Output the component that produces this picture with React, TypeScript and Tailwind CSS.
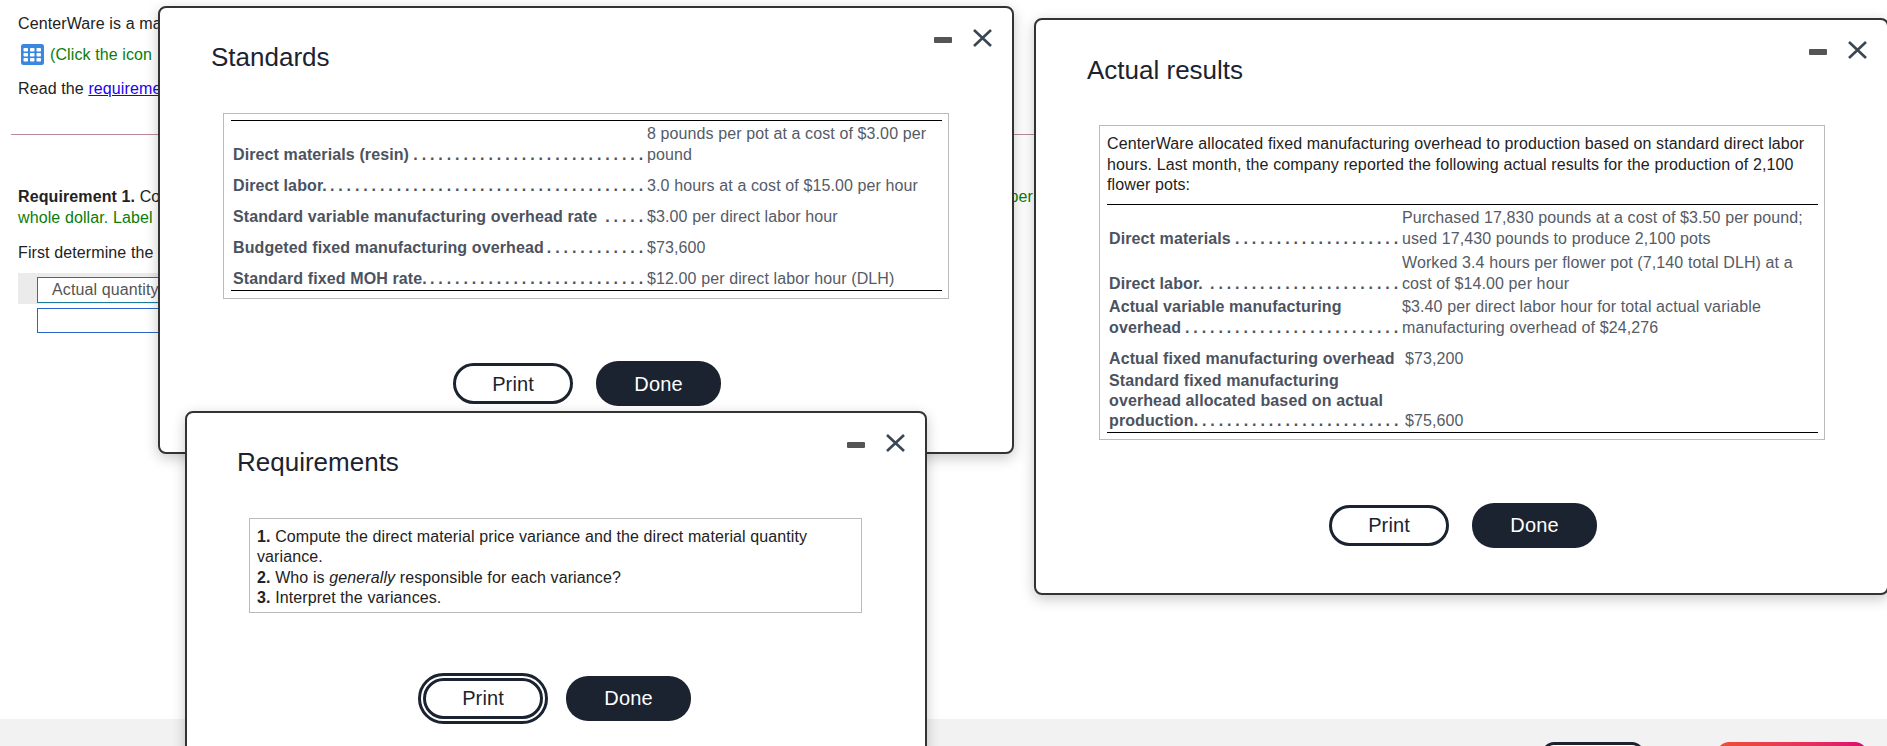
const font = "font-['Liberation_Sans',Arial,sans-serif]";

function WindowControls() {
  return (
    <div className="absolute top-[21px] right-[20px] flex items-center gap-[21px]">
      <div className="mt-[3px] h-[6px] w-[18px] rounded-[1px] bg-[#555]" />
      <svg width="19" height="18" viewBox="0 0 19 18" fill="none" stroke="#3a4654" strokeWidth="2.6">
        <path d="M1 1 L18 17 M18 1 L1 17" />
      </svg>
    </div>
  );
}

function Buttons({ focused, className }: { focused?: boolean; className: string }) {
  return (
    <div className={`flex items-center gap-[23px] ${className}`}>
      <button
        className={
          focused
            ? "h-[41px] w-[120px] rounded-[21px] border-[3px] border-[#1b2330] bg-white text-[20px] text-[#1b2330] outline-[3px] outline-offset-[2px] outline-[#1b2330]"
            : "h-[41px] w-[120px] rounded-[21px] border-[3px] border-[#1b2330] bg-white text-[20px] text-[#1b2330]"
        }
      >
        Print
      </button>
      <button className="h-[45px] w-[125px] rounded-[22px] bg-[#1b2330] text-[20px] text-white">Done</button>
    </div>
  );
}

function Label({ children, dots = 0 }: { children: React.ReactNode; dots?: number }) {
  return (
    <div className="flex items-end justify-between whitespace-nowrap pl-[2px] font-bold text-[#4b5260]">
      <div>{children}</div>
      {dots > 0 && <div className="tracking-[3.9px]">{".".repeat(dots)}</div>}
    </div>
  );
}

function Row({ label, value, dots = 0, labelWidth, className }: { label: string; value: string; dots?: number; labelWidth: string; className?: string }) {
  return (
    <div className={`flex items-end ${className ?? ""}`}>
      <div className={`${labelWidth} shrink-0`}>
        <Label dots={dots}>{label}</Label>
      </div>
      <div className="flex-1 text-[#555b66]">{value}</div>
    </div>
  );
}

function Standards() {
  return (
    <div className="absolute left-[158px] top-[6px] z-10 h-[448px] w-[856px] rounded-[8px] border-2 border-[#333] bg-white shadow-[0_4px_14px_rgba(0,0,0,0.22)]">
      <WindowControls />
      <h2 className="absolute left-[51px] top-[30px] text-[26px] tracking-normal text-[#1b2330]">Standards</h2>
      <div className="ml-[63px] mt-[105px] w-[726px] border border-[#bbb] pb-[7px] pl-[7px] pr-[6px] pt-[6px] leading-[21px]">
        <div className="flex flex-col gap-[10px] border-y border-black pb-px pt-[2px]">
          <Row labelWidth="w-[416px]" dots={28} label="Direct materials (resin)" value="8 pounds per pot at a cost of $3.00 per pound" />
          <Row labelWidth="w-[416px]" dots={38} label="Direct labor." value="3.0 hours at a cost of $15.00 per hour" />
          <Row labelWidth="w-[416px]" dots={5} label="Standard variable manufacturing overhead rate" value="$3.00 per direct labor hour" />
          <Row labelWidth="w-[416px]" dots={12} label="Budgeted fixed manufacturing overhead" value="$73,600" />
          <Row labelWidth="w-[416px]" dots={26} label="Standard fixed MOH rate." value="$12.00 per direct labor hour (DLH)" />
        </div>
      </div>
      <Buttons className="ml-[293px] mt-[62px]" />
    </div>
  );
}

function Requirements() {
  return (
    <div className="absolute left-[185px] top-[411px] z-20 h-[360px] w-[742px] rounded-[8px] border-2 border-[#333] bg-white shadow-[0_4px_14px_rgba(0,0,0,0.22)]">
      <WindowControls />
      <h2 className="absolute left-[50px] top-[30px] text-[26px] tracking-normal text-[#1b2330]">Requirements</h2>
      <div className="ml-[62px] mt-[105px] w-[613px] border border-[#bbb] pb-[3px] pl-[7px] pr-[6px] pt-[8px] leading-[20.4px] text-[#222]">
        <p>
          <b>1.</b> Compute the direct material price variance and the direct material quantity variance.
        </p>
        <p>
          <b>2.</b> Who is <i>generally</i> responsible for each variance?
        </p>
        <p>
          <b>3.</b> Interpret the variances.
        </p>
      </div>
      <Buttons focused className="ml-[236px] mt-[63px]" />
    </div>
  );
}

function Actual() {
  return (
    <div className="absolute left-[1034px] top-[18px] z-10 h-[577px] w-[855px] rounded-[8px] border-2 border-[#333] bg-white shadow-[0_4px_14px_rgba(0,0,0,0.22)]">
      <WindowControls />
      <h2 className="absolute left-[51px] top-[31px] text-[26px] tracking-normal text-[#1b2330]">Actual results</h2>
      <div className="ml-[63px] mt-[105px] w-[726px] border border-[#bbb] pb-[6px] pl-[7px] pr-[6px] pt-[8px] leading-[20.5px]">
        <p className="text-[#222]">
          CenterWare allocated fixed manufacturing overhead to production based on standard direct labor hours. Last
          month, the company reported the following actual results for the production of 2,100 flower pots:
        </p>
        <div className="mt-[8px] flex flex-col border-y border-black pb-px pt-[2px] leading-[21px]">
          <Row labelWidth="w-[295px]" dots={20} label="Direct materials" value="Purchased 17,830 pounds at a cost of $3.50 per pound; used 17,430 pounds to produce 2,100 pots" />
          <Row className="mt-[3px]" labelWidth="w-[295px]" dots={23} label="Direct labor." value="Worked 3.4 hours per flower pot (7,140 total DLH) at a cost of $14.00 per hour" />
          <div className="mt-[2px] flex items-end">
            <div className="w-[295px] shrink-0">
              <Label>Actual variable manufacturing</Label>
              <Label dots={26}>overhead</Label>
            </div>
            <div className="flex-1 text-[#555b66]">$3.40 per direct labor hour for total actual variable manufacturing overhead of $24,276</div>
          </div>
          <Row className="mt-[10px]" labelWidth="w-[298px]" label="Actual fixed manufacturing overhead" value="$73,200" />
          <div className="mt-[2px] flex items-end leading-[20px]">
            <div className="w-[298px] shrink-0 pr-[3px]">
              <Label>Standard fixed manufacturing</Label>
              <Label>overhead allocated based on actual</Label>
              <Label dots={25}>production</Label>
            </div>
            <div className="flex-1 text-[#555b66]">$75,600</div>
          </div>
        </div>
      </div>
      <Buttons className="ml-[293px] mt-[63px]" />
    </div>
  );
}

export default function App() {
  return (
    <div className={`${font} relative h-[746px] w-full overflow-hidden bg-white text-[16px] tracking-[0.11px] text-[#222]`}>
      <div className="flex h-[719px] flex-col pl-[18px] pt-[14px]">
        <p className="leading-[20px]">CenterWare is a ma</p>
        <div className="mt-[10px] flex h-[21px] items-center gap-[6px] text-[#0a7d0a]">
          <svg width="23" height="21" viewBox="0 0 23 21" className="ml-[3px]">
            <rect width="23" height="21" rx="2.5" fill="#3a87e0" />
            <g fill="white">
              <rect x="2.5" y="4" width="4.5" height="3.5" rx="0.8" />
              <rect x="9" y="4" width="4.5" height="3.5" rx="0.8" />
              <rect x="15.5" y="4" width="4.5" height="3.5" rx="0.8" />
              <rect x="2.5" y="9" width="4.5" height="3.5" rx="0.8" />
              <rect x="9" y="9" width="4.5" height="3.5" rx="0.8" />
              <rect x="15.5" y="9" width="4.5" height="3.5" rx="0.8" />
              <rect x="2.5" y="14" width="4.5" height="3.5" rx="0.8" />
              <rect x="9" y="14" width="4.5" height="3.5" rx="0.8" />
              <rect x="15.5" y="14" width="4.5" height="3.5" rx="0.8" />
            </g>
          </svg>
          <span>(Click the icon</span>
        </div>
        <p className="mt-[14px] leading-[20px]">
          Read the <span className="text-[#2200ee] underline">requireme</span>
        </p>
        <div className="-ml-[7px] mt-[35px] h-px w-[1030px] bg-[#b98a9a]" />
        <div className="mt-[51px] flex w-[1015px] justify-between leading-[21px]">
          <span>
            <b>Requirement 1.</b> Co
          </span>
          <span className="text-[#0a7d0a]">per</span>
        </div>
        <p className="leading-[21px] text-[#0a7d0a]">whole dollar. Label</p>
        <p className="mt-[15px] leading-[20px]">First determine the</p>
        <div className="mt-[10px] w-[150px] bg-[#ebebeb] pb-px pl-[19px] pt-[4px]">
          <div className="h-[26px] border border-[#1a7a9a] bg-white pl-[14px] leading-[24px] text-[#555]">Actual quantity</div>
        </div>
        <div className="ml-[19px] mt-[4px] h-[25px] w-[130px] border border-[#2a66c8] bg-white" />
      </div>
      <div className="relative h-[27px] bg-[#f2f2f2]">
        <div className="absolute left-[1542px] top-[23px] h-[40px] w-[102px] rounded-[12px] border-[3px] border-[#1b2330] bg-white" />
        <div className="absolute left-[1717px] top-[23px] h-[40px] w-[150px] rounded-[12px] bg-gradient-to-r from-[#f04e30] to-[#e0006e]" />
      </div>
      <Standards />
      <Actual />
      <Requirements />
    </div>
  );
}
